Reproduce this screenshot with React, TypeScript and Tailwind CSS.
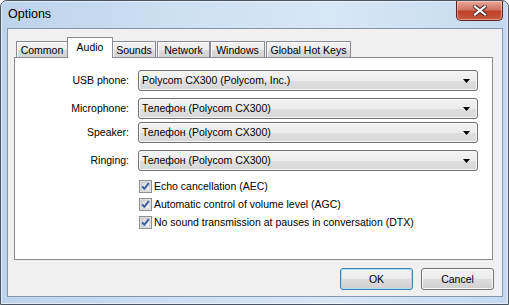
import React from "react";

const font = "font-['Liberation_Sans',Arial,sans-serif]";

function Arrow() {
  return (
    <svg width="7" height="4" viewBox="0 0 7 4" className="block">
      <path d="M0 0 H7 L3.5 4 Z" fill="#000" />
    </svg>
  );
}

function Dropdown({ text }: { text: string }) {
  return (
    <div className="h-[21px] w-[340px] rounded-[3px] border border-[#707070] bg-[linear-gradient(to_bottom,#f4f4f4_0%,#ececec_50%,#e0e0e0_50%,#d6d6d6_100%)] shadow-[inset_0_0_0_1px_#f8f8f8] flex items-center pl-[3px] pr-[7px]">
      <span className="flex-1 text-[10.5px] leading-none text-black whitespace-nowrap">{text}</span>
      <Arrow />
    </div>
  );
}

function Check({ label }: { label: string }) {
  return (
    <div className="h-[18px] flex items-center">
      <svg width="13" height="13" viewBox="0 0 13 13" className="block ml-[1px] shrink-0">
        <defs>
          <linearGradient id="cbg" x1="0" y1="0" x2="1" y2="1">
            <stop offset="0" stopColor="#cdd1d6" />
            <stop offset="1" stopColor="#f7f7f7" />
          </linearGradient>
        </defs>
        <rect x="0.5" y="0.5" width="12" height="12" fill="#f4f4f4" stroke="#8e8f8f" />
        <rect x="2" y="2" width="9" height="9" fill="url(#cbg)" stroke="#bcbfc4" strokeWidth="0.8" />
        <path d="M3.2 6.4 L5.3 8.9 L9.8 3.2" fill="none" stroke="#3e5e9c" strokeWidth="1.9" strokeLinejoin="round" />
      </svg>
      <span className="ml-[2px] text-[10.5px] leading-none whitespace-nowrap">{label}</span>
    </div>
  );
}

function Tab({ label, w, selected, cls }: { label: string; w: string; selected?: boolean; cls?: string }) {
  if (selected) {
    return (
      <div className={`${w} ${cls ?? ""} h-[21px] mb-[-1px] relative z-10 border border-b-0 border-[#898c95] bg-white flex items-start justify-center pt-[4px] text-[10.5px] leading-none`}>
        {label}
      </div>
    );
  }
  return (
    <div className={`${w} ${cls ?? ""} h-[16px] border border-b-0 border-[#898c95] bg-[linear-gradient(to_bottom,#f3f3f3_0%,#ebebeb_50%,#dddddd_50%,#d2d2d2_100%)] shadow-[inset_1px_1px_0_#fcfcfc] flex items-center justify-center pt-[1px] text-[10.5px] leading-none`}>
      {label}
    </div>
  );
}

function CloseButton() {
  return (
    <div className="absolute top-0 right-[5px] w-[47px] h-[20px] rounded-b-[5px] border border-t-0 border-[#5b2119] bg-[linear-gradient(to_bottom,#e9a99b_0%,#d47561_45%,#c0412b_55%,#c8573f_100%)] shadow-[inset_0_0_0_1px_rgba(255,220,210,0.5)] flex items-center justify-center">
      <svg width="14" height="11" viewBox="0 0 14 11" className="block">
        <path d="M2 1.5 L12 9.5 M12 1.5 L2 9.5" stroke="#4a2a28" strokeWidth="4.2" strokeLinecap="square" />
        <path d="M2 1.5 L12 9.5 M12 1.5 L2 9.5" stroke="#ffffff" strokeWidth="2.2" strokeLinecap="square" />
      </svg>
    </div>
  );
}

export default function App() {
  return (
    <div className={`w-[509px] h-[305px] ${font} text-black`}>
      <div className="relative w-full h-full rounded-t-[7px] border border-[#4a5563] bg-[linear-gradient(to_right,#bdd3eb_0%,#cddff2_35%,#d8e7f6_65%,#c4d9ef_100%)] shadow-[inset_0_0_0_1px_rgba(255,255,255,0.55)] flex flex-col pl-[6px] pr-[5px] pb-[7px]">
        <div className="h-[27px] flex items-center pl-[1px] pb-[1px]">
          <span className="text-[12.5px] leading-none">Options</span>
        </div>
        <CloseButton />
        <div className="flex-1 border border-[#8396ab] bg-[#f0f0f0] flex flex-col">
          <div className="flex items-end pt-[8px] pl-[8px]">
            <Tab label="Common" w="w-[52px]" />
            <Tab label="Audio" w="w-[46px]" selected cls="ml-[-1px]" />
            <Tab label="Sounds" w="w-[44px]" cls="ml-[-1px]" />
            <Tab label="Network" w="w-[53px]" cls="ml-[1px]" />
            <Tab label="Windows" w="w-[55px]" />
            <Tab label="Global Hot Keys" w="w-[85px]" cls="ml-[1px]" />
          </div>
          <div className="ml-[6px] mr-[9px] h-[203px] border border-[#898c95] bg-white pt-[12px]">
            <div className="grid grid-cols-[114px_340px] gap-x-[9px] items-center text-[10.5px]">
              <div className="text-right leading-none">USB phone:</div>
              <Dropdown text="Polycom CX300 (Polycom, Inc.)" />
              <div className="text-right leading-none mt-[7px]">Microphone:</div>
              <div className="mt-[7px]"><Dropdown text="Телефон (Polycom CX300)" /></div>
              <div className="text-right leading-none mt-[3px]">Speaker:</div>
              <div className="mt-[3px]"><Dropdown text="Телефон (Polycom CX300)" /></div>
              <div className="text-right leading-none mt-[7px]">Ringing:</div>
              <div className="mt-[7px]"><Dropdown text="Телефон (Polycom CX300)" /></div>
              <div />
              <div className="mt-[6px] flex flex-col">
                <Check label="Echo cancellation (AEC)" />
                <Check label="Automatic control of volume level (AGC)" />
                <Check label="No sound transmission at pauses in conversation (DTX)" />
              </div>
            </div>
          </div>
          <div className="flex justify-end gap-[8px] pt-[8px] pr-[8px]">
            <button className="w-[73px] h-[22px] rounded-[3px] border border-[#3c7fb1] bg-[linear-gradient(to_bottom,#f2f2f2_0%,#ebebeb_50%,#dddddd_50%,#cfcfcf_100%)] shadow-[inset_0_0_0_1px_#a9dcf5] text-[10.5px] leading-none">
              OK
            </button>
            <button className="w-[73px] h-[22px] rounded-[3px] border border-[#707070] bg-[linear-gradient(to_bottom,#f2f2f2_0%,#ebebeb_50%,#dddddd_50%,#cfcfcf_100%)] shadow-[inset_0_0_0_1px_#fbfbfb] text-[10.5px] leading-none">
              Cancel
            </button>
          </div>
        </div>
      </div>
    </div>
  );
}
